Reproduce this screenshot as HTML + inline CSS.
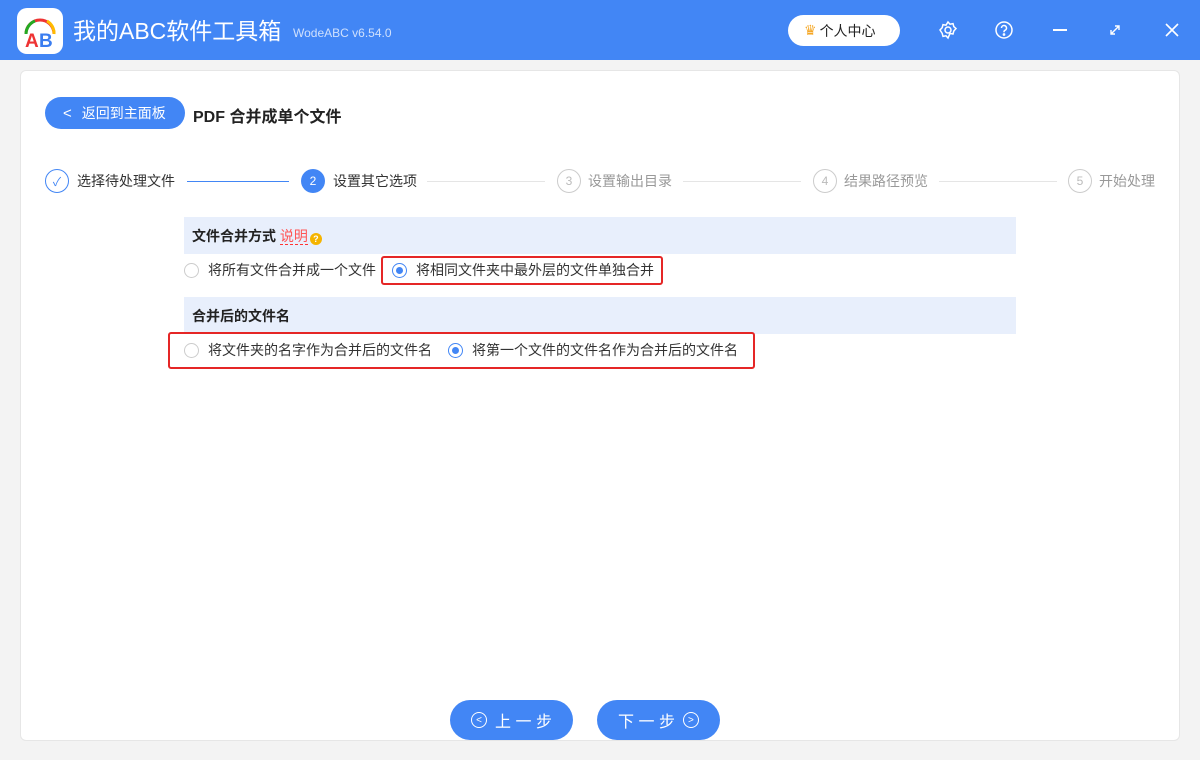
<!DOCTYPE html><html><head><meta charset="utf-8"><style>
*{margin:0;padding:0;box-sizing:border-box}
body{width:1200px;height:760px;background:#f3f3f3;font-family:"Liberation Sans","Noto Sans CJK SC",sans-serif;position:relative;overflow:hidden;color:#333}
.a{position:absolute}
.hdr{left:0;top:0;width:1200px;height:60px;background:#4286f5}
.card{left:20px;top:70px;width:1160px;height:671px;background:#fff;border:1px solid #e6e6e6;border-radius:6px}
.radio{width:15px;height:15px;border:1px solid #ccc;border-radius:50%;background:#fff}
.radio.on{border-color:#4286f5}
.radio.on::after{content:"";position:absolute;left:3px;top:3px;width:7px;height:7px;border-radius:50%;background:#4286f5}
.t13{font-size:14px;line-height:16px;white-space:nowrap}
.sec{background:#e8effc;left:184px;width:832px;height:37px}
.btn{background:#4286f5;color:#fff;border-radius:20px;height:40px;top:700px;font-size:16px;display:flex;align-items:center;justify-content:center;gap:8px}
.circ{width:24px;height:24px;border-radius:50%;font-size:12px;display:flex;align-items:center;justify-content:center}
</style></head><body>
<div class="a hdr"></div>
<div class="a" style="left:17px;top:8px;width:46px;height:46px;background:#fff;border-radius:10px">
<svg width="46" height="46" viewBox="0 0 46 46"><path d="M9 26 A14 14 0 0 1 37 26" fill="none" stroke="#e33" stroke-width="3"/><path d="M9 26 A14 14 0 0 1 18 13" fill="none" stroke="#2a2" stroke-width="3"/><path d="M30 13 A14 14 0 0 1 37 26" fill="none" stroke="#fb0" stroke-width="3"/><text x="8" y="39" font-size="19" font-weight="bold" fill="#e33" font-family="Liberation Sans">A</text><text x="22" y="39" font-size="19" font-weight="bold" fill="#3a7df0" font-family="Liberation Sans">B</text></svg></div>
<div class="a" style="left:73px;top:16px;color:#fff;font-size:23px;line-height:30px">我的ABC软件工具箱</div>
<div class="a" style="left:293px;top:26px;color:#cfe0fd;font-size:12px">WodeABC v6.54.0</div>
<div class="a" style="left:788px;top:15px;width:112px;height:31px;background:#fff;border-radius:16px;font-size:14px;color:#222;display:flex;align-items:center;padding-left:16px"><span style="color:#f5a623;margin-right:3px">♛</span>个人中心</div>
<svg class="a" style="left:938px;top:20px" width="20" height="20" viewBox="0 0 20 20" fill="none" stroke="#fff" stroke-width="1.5"><circle cx="10" cy="10" r="3"/><path d="M10 2l2 2.2 3-.6.8 3 2.2 2-2.2 2.4-.8 3-3-.6L10 18l-2-2.2-3 .6-.8-3L2 10l2.2-2.4.8-3 3 .6z"/></svg>
<svg class="a" style="left:994px;top:20px" width="20" height="20" viewBox="0 0 20 20" fill="none" stroke="#fff" stroke-width="1.5"><circle cx="10" cy="10" r="8"/><path d="M7.5 8a2.5 2.5 0 1 1 3.5 2.3c-.7.3-1 .8-1 1.5v.5"/><circle cx="10" cy="14.5" r=".6" fill="#fff"/></svg>
<div class="a" style="left:1053px;top:29px;width:14px;height:2px;background:#fff"></div>
<svg class="a" style="left:1108px;top:23px" width="14" height="14" viewBox="0 0 14 14" stroke="#fff" stroke-width="1.4" fill="none"><path d="M3 11l8-8M7 3h4v4M3 7v4h4"/></svg>
<svg class="a" style="left:1165px;top:23px" width="14" height="14" viewBox="0 0 14 14" stroke="#fff" stroke-width="1.6"><path d="M1 1l12 12M13 1L1 13"/></svg>
<div class="a card"></div>
<div class="a" style="left:45px;top:97px;width:140px;height:32px;background:#4286f5;border-radius:16px;color:#fff;font-size:14px;display:flex;align-items:center;padding-left:18px"><span style="margin-right:10px;font-size:15px">&lt;</span>返回到主面板</div>
<div class="a" style="left:193px;top:103px;font-size:16px;font-weight:bold;color:#222">PDF 合并成单个文件</div>
<div class="a circ" style="left:45px;top:169px;border:1px solid #4286f5;color:#4286f5">✓</div>
<div class="a t13" style="left:77px;top:173px;color:#333">选择待处理文件</div>
<div class="a" style="left:187px;top:181px;width:102px;height:1px;background:#4286f5"></div>
<div class="a circ" style="left:301px;top:169px;background:#4286f5;color:#fff">2</div>
<div class="a t13" style="left:333px;top:173px;color:#333">设置其它选项</div>
<div class="a" style="left:427px;top:181px;width:118px;height:1px;background:#e5e5e5"></div>
<div class="a circ" style="left:557px;top:169px;border:1px solid #ccc;color:#bbb">3</div>
<div class="a t13" style="left:588px;top:173px;color:#999">设置输出目录</div>
<div class="a" style="left:683px;top:181px;width:118px;height:1px;background:#e5e5e5"></div>
<div class="a circ" style="left:813px;top:169px;border:1px solid #ccc;color:#bbb">4</div>
<div class="a t13" style="left:844px;top:173px;color:#999">结果路径预览</div>
<div class="a" style="left:939px;top:181px;width:118px;height:1px;background:#e5e5e5"></div>
<div class="a circ" style="left:1068px;top:169px;border:1px solid #ccc;color:#bbb">5</div>
<div class="a t13" style="left:1099px;top:173px;color:#999">开始处理</div>
<div class="a sec" style="top:217px"></div>
<div class="a t13" style="left:192px;top:228px;font-weight:bold;color:#222">文件合并方式 <span style="color:#f55;font-weight:normal;border-bottom:1px dashed #f33">说明</span><span style="display:inline-block;width:12px;height:12px;border-radius:50%;background:#f5b400;color:#fff;font-size:9px;text-align:center;line-height:12px;vertical-align:-1px;margin-left:2px">?</span></div>
<div class="a radio" style="left:184px;top:263px"></div>
<div class="a t13" style="left:208px;top:262px">将所有文件合并成一个文件</div>
<div class="a" style="left:381px;top:256px;width:282px;height:29px;border:2px solid #e52626;border-radius:3px"></div>
<div class="a radio on" style="left:392px;top:263px"></div>
<div class="a t13" style="left:416px;top:262px">将相同文件夹中最外层的文件单独合并</div>
<div class="a sec" style="top:297px"></div>
<div class="a t13" style="left:192px;top:308px;font-weight:bold;color:#222">合并后的文件名</div>
<div class="a" style="left:168px;top:332px;width:587px;height:37px;border:2px solid #e52626;border-radius:3px"></div>
<div class="a radio" style="left:184px;top:343px"></div>
<div class="a t13" style="left:208px;top:342px">将文件夹的名字作为合并后的文件名</div>
<div class="a radio on" style="left:448px;top:343px"></div>
<div class="a t13" style="left:472px;top:342px">将第一个文件的文件名作为合并后的文件名</div>
<div class="a btn" style="left:450px;width:123px"><span style="width:16px;height:16px;border:1.5px solid #fff;border-radius:50%;font-size:10px;display:flex;align-items:center;justify-content:center">&lt;</span>上 一 步</div>
<div class="a btn" style="left:597px;width:123px">下 一 步<span style="width:16px;height:16px;border:1.5px solid #fff;border-radius:50%;font-size:10px;display:flex;align-items:center;justify-content:center">&gt;</span></div>
</body></html>
